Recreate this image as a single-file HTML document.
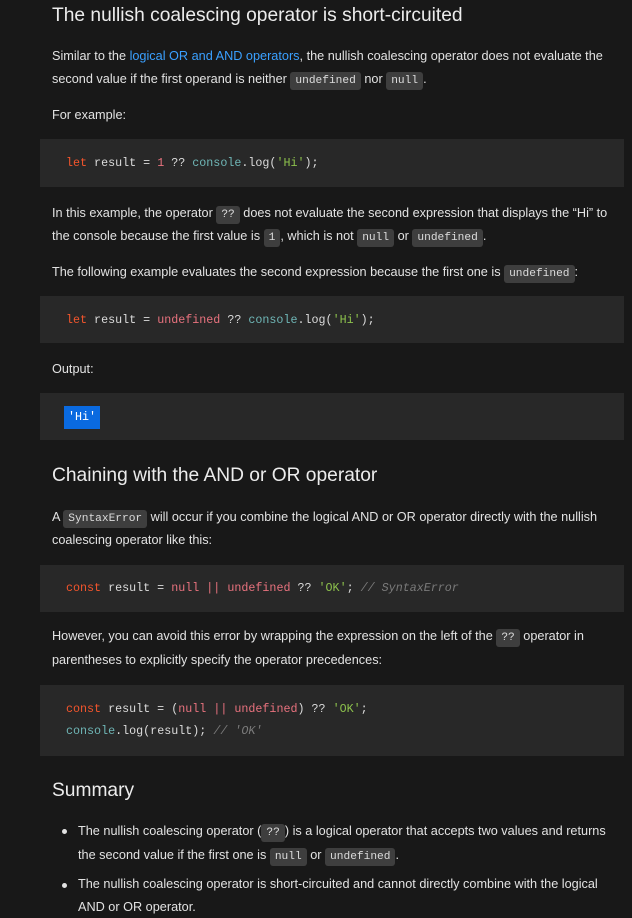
<!DOCTYPE html>
<html><head><meta charset="utf-8"><style>
html,body{margin:0;padding:0;background:#181818;width:632px;height:918px;overflow:hidden;}
body{position:relative;font-family:"Liberation Sans",sans-serif;color:#e2e2e2;font-size:12.7px;}
.l{position:absolute;left:52px;white-space:nowrap;line-height:23px;height:23px;}
.h{position:absolute;left:52px;white-space:nowrap;font-size:19.2px;color:#ececec;line-height:26px;}
.pre{position:absolute;left:40px;width:584px;background:#282828;}
.cl{position:absolute;left:26px;white-space:pre;font-family:"Liberation Mono",monospace;font-size:11.7px;line-height:22px;color:#dcdcdc;}
code{font-family:"Liberation Mono",monospace;font-size:11.2px;background:#3e3e3e;color:#dcdcdc;border-radius:3px;padding:3px 5px;}
a{color:#3aa0ff;text-decoration:none;}
.k{color:#f4552c}.n{color:#e8727e}.c{color:#6fb6b6}.s{color:#8cc04c}.m{color:#7a7a7a;font-style:italic}
.b{position:absolute;left:62px;width:5px;height:5px;border-radius:50%;background:#e2e2e2;}
</style></head><body>
<div class="h" style="top:3px">The nullish coalescing operator is short-circuited</div>
<div class="l" style="top:45px">Similar to the <a>logical OR and AND operators</a>, the nullish coalescing operator does not evaluate the</div>
<div class="l" style="top:68px">second value if the first operand is neither <code>undefined</code> nor <code>null</code>.</div>
<div class="l" style="top:104px">For example:</div>
<div class="pre" style="top:139px;height:48px"><div class="cl" style="top:13px"><span class="k">let</span> result = <span class="n">1</span> ?? <span class="c">console</span>.log(<span class="s">'Hi'</span>);</div></div>
<div class="l" style="top:202px">In this example, the operator <code>??</code> does not evaluate the second expression that displays the “Hi” to</div>
<div class="l" style="top:225px">the console because the first value is <code>1</code>, which is not <code>null</code> or <code>undefined</code>.</div>
<div class="l" style="top:261px">The following example evaluates the second expression because the first one is <code>undefined</code>:</div>
<div class="pre" style="top:296px;height:47px"><div class="cl" style="top:13px"><span class="k">let</span> result = <span class="n">undefined</span> ?? <span class="c">console</span>.log(<span class="s">'Hi'</span>);</div></div>
<div class="l" style="top:358px">Output:</div>
<div class="pre" style="top:393px;height:47px"><div class="cl" style="top:13px;left:24px;background:#0a6ae0;color:#fff;padding:0 4px;line-height:23px">'Hi'</div></div>
<div class="h" style="top:463px">Chaining with the AND or OR operator</div>
<div class="l" style="top:506px">A <code>SyntaxError</code> will occur if you combine the logical AND or OR operator directly with the nullish</div>
<div class="l" style="top:529px">coalescing operator like this:</div>
<div class="pre" style="top:565px;height:47px"><div class="cl" style="top:12px"><span class="k">const</span> result = <span class="n">null</span> <span class="n">||</span> <span class="n">undefined</span> ?? <span class="s">'OK'</span>; <span class="m">// SyntaxError</span></div></div>
<div class="l" style="top:625px">However, you can avoid this error by wrapping the expression on the left of the <code>??</code> operator in</div>
<div class="l" style="top:649px">parentheses to explicitly specify the operator precedences:</div>
<div class="pre" style="top:685px;height:71px"><div class="cl" style="top:13px"><span class="k">const</span> result = (<span class="n">null</span> <span class="n">||</span> <span class="n">undefined</span>) ?? <span class="s">'OK'</span>;
<span class="c">console</span>.log(result); <span class="m">// 'OK'</span></div></div>
<div class="h" style="top:778px">Summary</div>
<div class="b" style="top:829px"></div>
<div class="l" style="top:820px;left:78px">The nullish coalescing operator (<code>??</code>) is a logical operator that accepts two values and returns</div>
<div class="l" style="top:844px;left:78px">the second value if the first one is <code>null</code> or <code>undefined</code>.</div>
<div class="b" style="top:883px"></div>
<div class="l" style="top:873px;left:78px">The nullish coalescing operator is short-circuited and cannot directly combine with the logical</div>
<div class="l" style="top:896px;left:78px">AND or OR operator.</div>
</body></html>
